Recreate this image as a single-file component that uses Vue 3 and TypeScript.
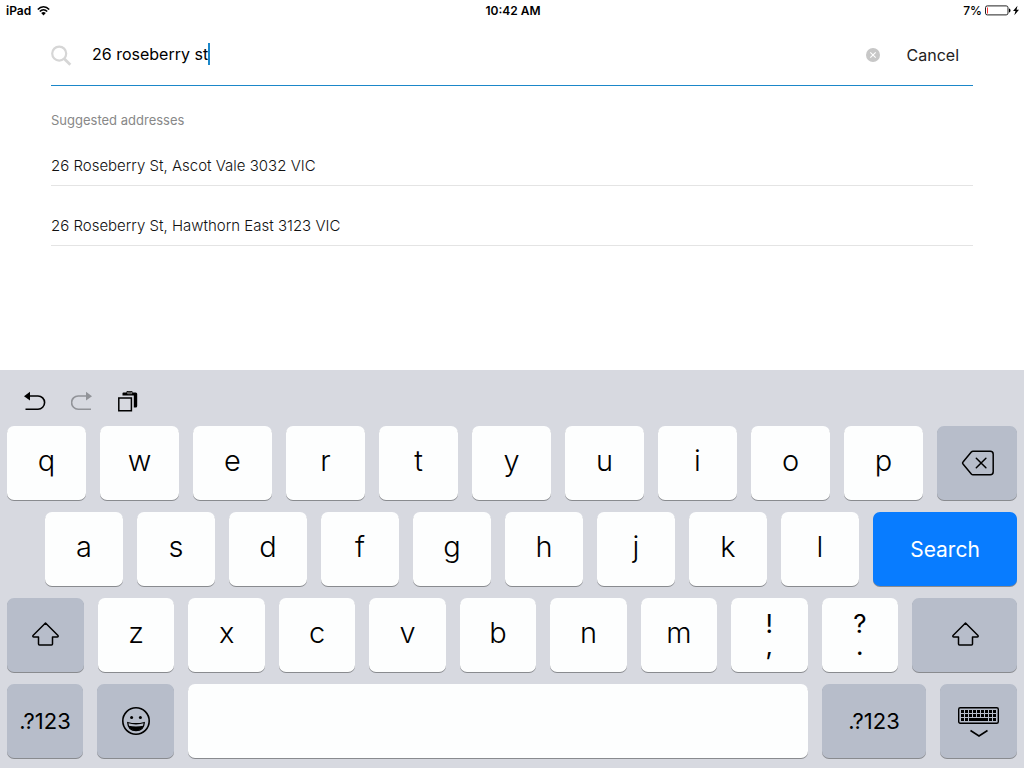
<script setup lang="ts">
import { ref } from 'vue'

const query = ref<string>('26 roseberry st')
const addresses: string[] = [
  '26 Roseberry St, Ascot Vale 3032 VIC',
  '26 Roseberry St, Hawthorn East 3123 VIC',
]
const topRow: string[] = [...'qwertyuiop']
const homeRow: string[] = [...'asdfghjkl']
const lowerRow: string[] = [...'zxcvbnm']
const punctuation: string[][] = [['!', ','], ['?', '.']]
const keyColumns: number[] = [0, 1, 2, 3, 4, 5, 6, 7, 8]

function type(text: string): void {
  query.value += text
}
function erase(): void {
  query.value = query.value.slice(0, -1)
}
</script>

<template>
  <div class="screen">
    <header class="status">
      <div class="status-side">
        <span>iPad</span>
        <svg class="wifi" width="13" height="10" viewBox="0 0 13 10" aria-hidden="true">
          <path d="M.8 3.6C4-.1 9-.1 12.200 3.600M2.800 5.600C5 3.200 8 3.200 10.200 5.600" fill="none" stroke="#000" stroke-width="1.500" />
          <path d="M4.200 7.100Q6.500 5.100 8.800 7.100L6.500 9.500Z" />
        </svg>
      </div>
      <div>10:42 AM</div>
      <div class="status-side right">
        <span>7%</span>
        <svg width="35" height="11" viewBox="0 0 35 11" aria-hidden="true">
          <rect x=".5" y=".9" width="22.500" height="9" rx="1.800" fill="#fff" stroke="#222" />
          <path d="M2 2.500h1v6H2z" fill="#f33" />
          <path d="M24 3.500q1.500 0 1.500 2t-1.500 2z" />
          <path d="M32.500.8 28 6h2.500l-1.200 4.200L34 4.800h-2.500z" />
        </svg>
      </div>
    </header>

    <main class="content">
      <form class="search" role="search" @submit.prevent>
        <svg class="lens" width="21" height="21" viewBox="0 0 21 21" aria-hidden="true">
          <circle cx="8.200" cy="8.600" r="7" fill="none" stroke="#d6d6d6" stroke-width="2.200" />
          <path d="m13 13.500 6.300 6.300" stroke="#d6d6d6" stroke-width="2.800" />
        </svg>
        <div class="field">
          <input v-model="query" type="text" aria-label="Search address" autocomplete="off" spellcheck="false" />
          <span class="caret"></span>
        </div>
        <button class="clear" type="button" aria-label="Clear text" @click="query = ''">
          <svg width="14" height="14" viewBox="0 0 14 14">
            <circle cx="7" cy="7" r="7" fill="#c7c7c7" />
            <path d="m4.300 4.300 5.400 5.400m0-5.400L4.300 9.700" stroke="#fff" stroke-width="1.100" />
          </svg>
        </button>
        <button class="cancel" type="button">Cancel</button>
      </form>

      <h2>Suggested addresses</h2>
      <ul>
        <li v-for="address in addresses" :key="address">
          <button type="button" @click="query = address">{{ address }}</button>
        </li>
      </ul>
    </main>

    <section class="keyboard" aria-label="Keyboard">
      <div class="tools">
        <button type="button" aria-label="Undo">
          <svg width="22" height="20" viewBox="0 0 22 20">
            <path d="M4 5h10a6.500 6.500 0 0 1 0 13.200H1.500" fill="none" stroke="#000" stroke-width="1.600" />
            <path d="M0 5.200 6 .8v8.800z" />
          </svg>
        </button>
        <button type="button" aria-label="Redo">
          <svg width="22" height="20" viewBox="0 0 22 20" fill="#919398">
            <path d="M17 5H7.200a6.500 6.500 0 0 0 0 13.200h12.800" fill="none" stroke="#919398" stroke-width="1.600" />
            <path d="M21 5.200 15 .8v8.800z" />
          </svg>
        </button>
        <button type="button" aria-label="Paste">
          <svg width="20" height="21" viewBox="0 0 20 21">
            <path d="M4.500 2.200q0-.8 1-.8h3V.8q0-.8 1-.8h4q1 0 1 .8v.6h3.200q1.500 0 1.500 1.500v12q0 1.500-1.500 1.500h-1.900V4.500H4.500z" />
            <path d="M9.700 1.200h4v1.500h-4z" fill="none" stroke="#aaa" stroke-width=".7" />
            <path d="M.8 6.900h12.600v12.800H.8z" fill="#d7d9e0" stroke="#000" stroke-width="1.500" />
          </svg>
        </button>
      </div>

      <div class="row">
        <button v-for="k in topRow" :key="k" class="key letter top" type="button" @click="type(k)">{{ k }}</button>
        <button class="key grey erase" type="button" aria-label="Delete" @click="erase">
          <svg width="33" height="26" viewBox="0 0 33 26" fill="none" stroke="#000" stroke-width="1.500" stroke-linecap="round" stroke-linejoin="round">
            <path d="M12 1.300h17.200q3 0 3 3v17.400q0 3-3 3H12q-1 0-1.700-.8L2 14q-.9-1 0-2l8.300-9.900q.7-.8 1.700-.8z" />
            <path d="m15.300 8.200 9.600 9.600m0-9.600-9.600 9.600" />
          </svg>
        </button>
      </div>

      <div class="row home">
        <button v-for="k in homeRow" :key="k" class="key letter mid" type="button" @click="type(k)">{{ k }}</button>
        <button class="key submit" type="button">Search</button>
      </div>

      <div class="row">
        <button class="key grey shift" type="button" aria-label="Left shift">
          <svg width="28" height="26" viewBox="0 0 28 26" fill="none" stroke="#000" stroke-width="1.500" stroke-linejoin="round">
            <path d="M14.500 1 27 13.500q.5 1.400-.8 1.400h-4.700V22q0 1-1 1h-12q-1 0-1-1v-7.100H2.800q-1.300 0-.8-1.400z" />
          </svg>
        </button>
        <button v-for="k in lowerRow" :key="k" class="key letter low" type="button" @click="type(k)">{{ k }}</button>
        <button v-for="[upper, lower] in punctuation" :key="lower" class="key dual low" type="button" @click="type(lower)">
          <span>{{ upper }}</span>
          <span>{{ lower }}</span>
        </button>
        <button class="key grey shift-wide" type="button" aria-label="Right shift">
          <svg width="28" height="26" viewBox="0 0 28 26" fill="none" stroke="#000" stroke-width="1.500" stroke-linejoin="round">
            <path d="M14.500 1 27 13.500q.5 1.400-.8 1.400h-4.700V22q0 1-1 1h-12q-1 0-1-1v-7.100H2.800q-1.300 0-.8-1.400z" />
          </svg>
        </button>
      </div>

      <div class="row">
        <button class="key grey mode" type="button">.?123</button>
        <button class="key grey narrow" type="button" aria-label="Emoji">
          <svg width="28" height="28" viewBox="0 0 28 28">
            <circle cx="14" cy="14" r="13.200" fill="none" stroke="#000" stroke-width="1.600" />
            <circle cx="9.600" cy="10.500" r="1.500" />
            <circle cx="18.400" cy="10.500" r="1.500" />
            <path d="M5.700 15.500q8.300 2.500 16.600 0-.5 8.200-8.300 8.200t-8.300-8.200z" fill="#b7bdca" stroke="#000" stroke-width="1.300" stroke-linejoin="round" />
            <path d="M6.600 18.800q7.400 1.600 14.800 0-1.400 4.600-7.400 4.600t-7.400-4.600z" />
          </svg>
        </button>
        <button class="key space" type="button" aria-label="Space" @click="type(' ')"></button>
        <button class="key grey mode-wide" type="button">.?123</button>
        <button class="key grey narrow" type="button" aria-label="Hide keyboard">
          <svg width="41" height="32" viewBox="0 0 41 32">
            <rect x=".7" y="2.700" width="39.600" height="15.600" rx="1.500" fill="none" stroke="#000" stroke-width="1.400" />
            <template v-for="c in keyColumns" :key="c">
              <rect :x="3 + c * 4" y="5" width="3" height="3" />
              <rect :x="3 + c * 4" y="9" width="3" height="3" />
            </template>
            <path d="M3 13h3v3H3zm4 0h3v3H7zm4 0h19v3H11zm20 0h3v3h-3zm4 0h3v3h-3z" />
            <path d="m12.500 25.500 8.500 5.500 8.500-5.500" fill="none" stroke="#000" stroke-width="1.600" />
          </svg>
        </button>
      </div>
    </section>
  </div>
</template>

<style>
body {
  margin: 0;
  background: #fff;
}
</style>

<style scoped>
.screen {
  display: flex;
  flex-direction: column;
  min-height: 100vh;
  color: #000;
  font-family: Inter, "Liberation Sans", sans-serif;
}
button,
input {
  padding: 0;
  border: 0;
  background: none;
  color: inherit;
  font: inherit;
}
svg {
  display: block;
  flex: none;
}
.status {
  display: flex;
  align-items: center;
  height: 21px;
  padding: 0 4px 0 6px;
  font-size: 12px;
  font-weight: 600;
}
.status-side {
  display: flex;
  flex: 1;
  align-items: center;
  gap: 6px;
}
.status-side.right {
  justify-content: flex-end;
  gap: 3px;
  font-weight: 500;
}
.content {
  padding: 0 51px;
}
.search {
  display: flex;
  align-items: center;
  height: 60px;
  padding-top: 4px;
  border-bottom: 1px solid #1b87c9;
}
.lens {
  margin-right: 20px;
}
.field {
  display: flex;
  flex: 1;
  align-items: center;
  min-width: 0;
  padding-bottom: 2px;
  font-size: 16px;
}
.field input {
  field-sizing: content;
  min-width: 0;
  height: 24px;
  outline: 0;
  caret-color: transparent;
}
.caret {
  width: 2px;
  height: 22px;
  background: #1b87c9;
}
.cancel {
  margin: 0 14px 0 27px;
  color: #222;
  font-size: 16px;
}
h2 {
  margin: 24px 0 0;
  color: #888;
  font-size: 13px;
  font-weight: 400;
  line-height: 20px;
}
ul {
  margin: 0;
  padding: 0;
  list-style: none;
}
li {
  display: flex;
  padding-top: 19px;
  border-bottom: 1px solid #e4e4e4;
}
li:first-child {
  padding-top: 15px;
}
li button {
  flex: 1;
  height: 40px;
  color: #111;
  font-size: 15px;
  font-weight: 350;
  text-align: left;
}
.keyboard {
  display: flex;
  flex-direction: column;
  gap: 12px;
  margin-top: auto;
  padding: 0 7px 10px;
  background: #d7d9e0;
}
.tools {
  display: flex;
  align-items: center;
  gap: 25px;
  height: 44px;
  padding: 18px 17px 0;
  box-sizing: border-box;
}
.row {
  display: flex;
  gap: 14px;
}
.home {
  padding-left: 38px;
}
.key {
  display: flex;
  flex: 154 1 0;
  align-items: center;
  justify-content: center;
  min-width: 0;
  height: 74px;
  border-radius: 7px;
  background: #fdfefe;
  box-shadow: 0 1px 0 #898b8f;
  font-size: 22px;
}
.letter {
  padding-bottom: 6px;
  font-size: 29px;
  font-weight: 350;
}
.top {
  flex-grow: 158;
}
.erase {
  flex-grow: 160;
}
.mid {
  flex-grow: 156;
}
.low {
  flex-grow: 153;
}
.mode {
  flex-grow: 152;
}
.dual {
  flex-direction: column;
  font-size: 26px;
  line-height: 22px;
}
.grey {
  background: #b7bdca;
}
.submit {
  flex-grow: 288;
  background: #087cff;
  color: #fff;
  font-size: 21px;
}
.shift-wide {
  flex-grow: 210;
}
.space {
  flex-grow: 1240;
}
.mode-wide {
  flex-grow: 208;
}
</style>
